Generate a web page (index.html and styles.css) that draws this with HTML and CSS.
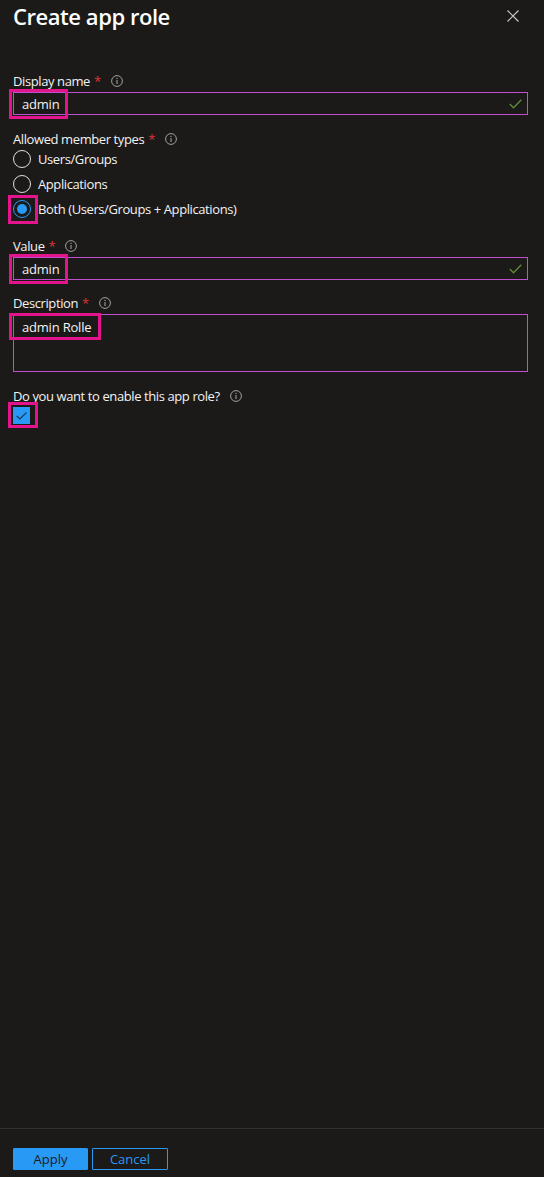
FILE: index.html
```html
<!DOCTYPE html>
<html lang="en">
<head>
    <meta charset="UTF-8">
    <meta name="viewport" content="width=device-width, initial-scale=1.0">
    <title>Create app role</title>
    <link rel="stylesheet" href="styles.css">
</head>
<body>

    <div class="panel">
        <!-- Cabecera -->
        <div class="panel__header">
            <h1 class="panel__title">Create app role</h1>
            <button class="panel__close" aria-label="Close">
                <svg width="12" height="12" viewBox="0 0 12 12"><path d="M0.5 0.5 L11.5 11.5 M11.5 0.5 L0.5 11.5" stroke="#c8c6c4" stroke-width="1.2" fill="none"/></svg>
            </button>
        </div>

        <div class="panel__body">
            <!-- Display name -->
            <div class="field field--first">
                <label class="field__label"><span>Display name</span><span class="req">*</span><svg class="info" width="12" height="12" viewBox="0 0 12 12"><circle cx="6" cy="6" r="5.4" stroke="#a19f9d" fill="none"/><path d="M6 5 V9" stroke="#a19f9d" stroke-width="1.1"/><circle cx="6" cy="3.4" r="0.7" fill="#a19f9d"/></svg></label>
                <div class="input">
                    <span class="input__text">admin</span>
                    <svg class="input__ok" width="13" height="10" viewBox="0 0 13 10"><path d="M0.8 5 L4.5 8.8 L12.3 0.8" stroke="#5f8c35" stroke-width="1.3" fill="none"/></svg>
                    <span class="mark mark--text"></span>
                </div>
            </div>

            <!-- Allowed member types -->
            <div class="field field--radios">
                <label class="field__label"><span>Allowed member types</span><span class="req">*</span><svg class="info" width="12" height="12" viewBox="0 0 12 12"><circle cx="6" cy="6" r="5.4" stroke="#a19f9d" fill="none"/><path d="M6 5 V9" stroke="#a19f9d" stroke-width="1.1"/><circle cx="6" cy="3.4" r="0.7" fill="#a19f9d"/></svg></label>
                <div class="radios">
                    <div class="radio"><span class="radio__dot"></span><span>Users/Groups</span></div>
                    <div class="radio"><span class="radio__dot"></span><span>Applications</span></div>
                    <div class="radio radio--checked"><span class="radio__dot"><span class="mark mark--radio"></span></span><span>Both (Users/Groups + Applications)</span></div>
                </div>
            </div>

            <!-- Value -->
            <div class="field field--value">
                <label class="field__label"><span>Value</span><span class="req">*</span><svg class="info" width="12" height="12" viewBox="0 0 12 12"><circle cx="6" cy="6" r="5.4" stroke="#a19f9d" fill="none"/><path d="M6 5 V9" stroke="#a19f9d" stroke-width="1.1"/><circle cx="6" cy="3.4" r="0.7" fill="#a19f9d"/></svg></label>
                <div class="input">
                    <span class="input__text">admin</span>
                    <svg class="input__ok" width="13" height="10" viewBox="0 0 13 10"><path d="M0.8 5 L4.5 8.8 L12.3 0.8" stroke="#5f8c35" stroke-width="1.3" fill="none"/></svg>
                    <span class="mark mark--text"></span>
                </div>
            </div>

            <!-- Description -->
            <div class="field field--desc">
                <label class="field__label"><span>Description</span><span class="req">*</span><svg class="info" width="12" height="12" viewBox="0 0 12 12"><circle cx="6" cy="6" r="5.4" stroke="#a19f9d" fill="none"/><path d="M6 5 V9" stroke="#a19f9d" stroke-width="1.1"/><circle cx="6" cy="3.4" r="0.7" fill="#a19f9d"/></svg></label>
                <div class="textarea">
                    <span class="input__text">admin Rolle</span>
                    <span class="mark mark--area"></span>
                </div>
            </div>

            <!-- Enable -->
            <div class="field field--enable">
                <label class="field__label"><span>Do you want to enable this app role?</span><svg class="info" width="12" height="12" viewBox="0 0 12 12"><circle cx="6" cy="6" r="5.4" stroke="#a19f9d" fill="none"/><path d="M6 5 V9" stroke="#a19f9d" stroke-width="1.1"/><circle cx="6" cy="3.4" r="0.7" fill="#a19f9d"/></svg></label>
                <div class="checkbox">
                    <svg width="11" height="8" viewBox="0 0 11 8"><path d="M0.6 3.8 L3.8 7 L10.4 0.6" stroke="#1f3550" stroke-width="1.2" fill="none"/></svg>
                    <span class="mark mark--check"></span>
                </div>
            </div>
        </div>

        <!-- Pie -->
        <div class="panel__footer">
            <button class="btn btn--primary">Apply</button>
            <button class="btn btn--outline">Cancel</button>
        </div>
    </div>

</body>
</html>
```

FILE: styles.css
```css
body {
    margin: 0;
    padding: 0;
    background-color: #1b1a19;
    color: #f3f2f1;
    font-family: 'Open Sans', 'Noto Sans', sans-serif;
    font-size: 13px;
}

.panel {
    height: 1177px;
    display: flex;
    flex-direction: column;
    overflow: hidden;
}

.panel__header {
    display: flex;
    justify-content: space-between;
    align-items: flex-start;
    padding: 0 25px 0 13px;
}

.panel__title {
    margin: 0;
    font-size: 22px;
    line-height: 32px;
    font-weight: 600;
    color: #ffffff;
    letter-spacing: -0.45px;
}

.panel__close {
    background: none;
    border: none;
    padding: 0;
    margin-top: 10px;
    width: 12px;
    height: 12px;
    display: flex;
}

.panel__body {
    flex: 1;
    padding: 0 16px 0 13px;
}

.field__label {
    display: flex;
    align-items: center;
    height: 18px;
    line-height: 18px;
    color: #f3f2f1;
    letter-spacing: -0.4px;
}

.req {
    color: #e0323c;
    margin-left: 4px;
}

.info {
    margin-left: 10px;
}

.field--first { margin-top: 40px; }
.field--radios { margin-top: 15px; }
.field--value { margin-top: 19px; }
.field--desc { margin-top: 14px; }
.field--enable { margin-top: 15px; }

.input {
    position: relative;
    box-sizing: border-box;
    height: 23px;
    margin-top: 2px;
    border: 1px solid #bd4fd0;
    display: flex;
    align-items: center;
    padding: 0 5px 0 8px;
}

.input__text {
    flex: 1;
    color: #f3f2f1;
    letter-spacing: -0.2px;
}

.textarea {
    position: relative;
    box-sizing: border-box;
    height: 58px;
    margin-top: 2px;
    border: 1px solid #bd4fd0;
    padding: 2px 8px;
    line-height: 20px;
}

.radios {
    margin-top: 2px;
    display: flex;
    flex-direction: column;
    gap: 7px;
}

.radio {
    display: flex;
    align-items: center;
    height: 18px;
    letter-spacing: -0.4px;
}

.radio__dot {
    position: relative;
    box-sizing: border-box;
    width: 18px;
    height: 18px;
    border-radius: 50%;
    border: 1px solid #e1dfdd;
    margin-right: 7px;
}

.radio--checked .radio__dot {
    border-color: #2899f5;
}

.radio--checked .radio__dot::after {
    content: "";
    position: absolute;
    left: 3px;
    top: 3px;
    width: 10px;
    height: 10px;
    border-radius: 50%;
    background-color: #2899f5;
}

.checkbox {
    position: relative;
    box-sizing: border-box;
    width: 17px;
    height: 17px;
    margin-top: 2px;
    background-color: #2899f5;
    display: flex;
    align-items: center;
    justify-content: center;
}

/* Recuadros rosas de anotación */
.mark {
    position: absolute;
    box-sizing: border-box;
    border: 3px solid #e3148c;
}

.mark--text {
    left: -5px;
    top: -4px;
    width: 59px;
    height: 30px;
}

.mark--area {
    left: -5px;
    top: -2px;
    width: 92px;
    height: 27px;
}

.mark--radio {
    left: -6px;
    top: -6px;
    width: 30px;
    height: 29px;
}

.mark--check {
    left: -5px;
    top: -5px;
    width: 30px;
    height: 26px;
}

.panel__footer {
    border-top: 1px solid #323130;
    padding: 19px 13px 7px;
    display: flex;
    gap: 4px;
}

.btn {
    box-sizing: border-box;
    height: 22px;
    width: 75px;
    font-family: 'Open Sans', 'Noto Sans', sans-serif;
    font-size: 13px;
    border-radius: 1px;
    padding: 0;
    cursor: pointer;
}

.btn--primary {
    background-color: #2899f5;
    border: 1px solid #2899f5;
    color: #1b1a19;
}

.btn--outline {
    width: 76px;
    background-color: #1b1a19;
    border: 1px solid #2899f5;
    color: #2899f5;
}
```
